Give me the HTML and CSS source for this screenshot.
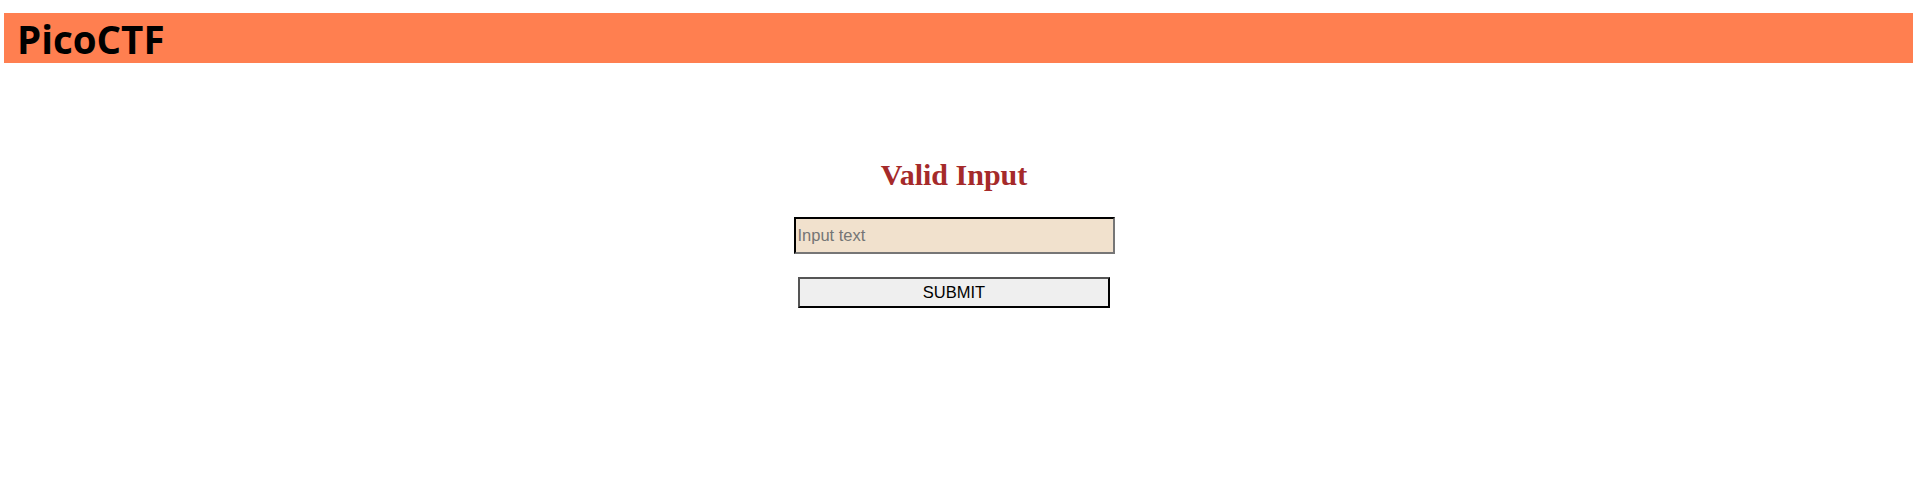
FILE: index.html
```html
<!DOCTYPE html>
<html>
<head>
<meta charset="utf-8">
<title>PicoCTF</title>
<link rel="stylesheet" href="styles.css">
</head>
<body>
<header class="topbar">
  <h1 class="brand">PicoCTF</h1>
</header>
<main class="content">
  <h2 class="title">Valid Input</h2>
  <form class="form">
    <input class="text-input" type="text" placeholder="Input text">
    <button class="submit" type="button">SUBMIT</button>
  </form>
</main>
</body>
</html>
```
FILE: styles.css
```css
html, body {
  margin: 0;
  padding: 0;
  background: #ffffff;
}

.topbar {
  margin: 13px 0 0 4px;
  height: 50px;
  background: #ff7f50;
  display: flex;
  align-items: center;
  padding-left: 13px;
}

.brand {
  margin: 0;
  font-family: "Open Sans", "Noto Sans", sans-serif;
  font-weight: 700;
  font-size: 38.5px;
  line-height: 50px;
  color: #000000;
  position: relative;
  top: 1px;
}

.content {
  display: flex;
  flex-direction: column;
  align-items: center;
  padding-right: 5px;
}

.title {
  margin: 94px 0 0 0;
  font-family: "Liberation Serif", "Times New Roman", serif;
  font-weight: 700;
  font-size: 30px;
  line-height: 36px;
  color: #a52a2a;
}

.form {
  display: flex;
  flex-direction: column;
  align-items: center;
}

.text-input {
  box-sizing: border-box;
  margin-top: 24px;
  width: 321px;
  height: 37px;
  padding: 0 2px;
  border: 2px inset #767676;
  border-top-color: #1a1a1a;
  border-left-color: #1a1a1a;
  border-right-color: #767676;
  border-bottom-color: #767676;
  background: #f1e1cd;
  font-family: "Liberation Sans", Arial, sans-serif;
  font-size: 16.5px;
  color: #000;
  outline: none;
}

.text-input::placeholder {
  color: #757575;
  opacity: 1;
}

.submit {
  box-sizing: border-box;
  margin-top: 23px;
  width: 312px;
  height: 31px;
  padding: 0;
  border: 2px outset #555555;
  border-top-color: #555555;
  border-left-color: #555555;
  border-right-color: #000000;
  border-bottom-color: #000000;
  background: #efefef;
  font-family: "Liberation Sans", Arial, sans-serif;
  font-size: 16.5px;
  color: #000000;
}
```
